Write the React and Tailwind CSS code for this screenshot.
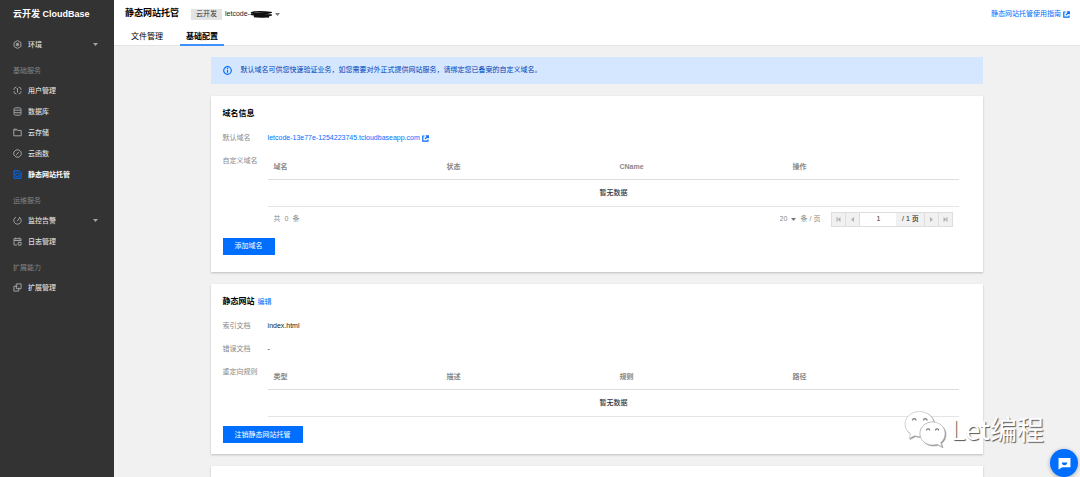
import React from "react";

function Icon({ children, className = "" }) {
  return (
    <svg
      viewBox="0 0 18 18"
      className={`size-[9px] shrink-0 ${className}`}
      fill="none"
      stroke="currentColor"
      strokeWidth="2"
      aria-hidden="true"
    >
      {children}
    </svg>
  );
}

const icons = {
  env: (
    <>
      <path d="M9 1.2 15.8 5v8L9 16.8 2.2 13V5z" />
      <circle cx="9" cy="9" r="2.6" fill="currentColor" />
    </>
  ),
  user: (
    <>
      <path d="M6.8 1.8 2.2 4.6v3M2.2 10.4v3l4.6 2.8M11.2 1.8l4.6 2.8v3M15.8 10.4v3l-4.6 2.8" />
      <path d="M9 4.6v8.8M7.2 5.4H9" />
    </>
  ),
  database: (
    <>
      <rect x="2" y="1.6" width="14" height="14.8" rx="3" />
      <path d="M2 6.4h14M2 11.4h14" />
    </>
  ),
  folder: (
    <>
      <path d="M1.6 15.6V2.4h5.6l1.6 2.4h7.6v10.8z" />
      <path d="M1.6 3.8h6" />
    </>
  ),
  func: (
    <>
      <path d="M6 1.8h6l4.4 4.4v5.6L12 16.2H6l-4.4-4.4V6.2z" />
      <path d="M6.4 12.2 11.6 5.8" />
    </>
  ),
  site: (
    <>
      <path d="M2 1.6h9.6L16 5.4v11H2z" />
      <path d="M5.6 6h4.2l2.4 2v4.6H5.6z" strokeWidth="1.6" />
    </>
  ),
  monitor: (
    <>
      <path d="M6 2.2a7.4 7.4 0 1 0 6 0" />
      <path d="M8.6 10.4 13.4 3" />
    </>
  ),
  log: (
    <>
      <path d="M8 16H2V3.4h14V8M2 7h14M5.4 1v3.6M12.6 1v3.6" />
      <path d="M10.4 10.6h5.8v5.6h-5.8z" />
    </>
  ),
  extend: (
    <>
      <path d="M6.6 1.8h9.6v9.6H6.6z" />
      <path d="M9 6.4H1.8v9.8h9.8V9" />
    </>
  ),
};

function Caret({ className = "" }) {
  return (
    <svg viewBox="0 0 10 6" className={`h-[3px] w-[5px] shrink-0 ${className}`} fill="currentColor" aria-hidden="true">
      <path d="M0 0h10L5 6z" />
    </svg>
  );
}

function External() {
  return (
    <svg viewBox="0 0 14 14" className="size-[7px] shrink-0" fill="none" stroke="currentColor" strokeWidth="2.4" aria-hidden="true">
      <path d="M5 2H1.6v10.4H12V9M7.6 1.6h5v5M12.4 1.8 6 8" />
    </svg>
  );
}

function NavItem({ icon, label, active, expandable }) {
  return (
    <a
      href="#"
      className={`flex h-[21px] items-center gap-[6px] pr-[16px] pl-[13px] text-[7px]/[12px] ${
        active ? "font-bold text-white" : "font-medium text-[#dddddd]"
      }`}
    >
      <Icon className={active ? "text-[#006eff]" : "text-[#a0a0a0]"}>{icons[icon]}</Icon>
      <span className="flex-1">{label}</span>
      {expandable && <Caret className="text-[#a5a5a5]" />}
    </a>
  );
}

function NavLabel({ children }) {
  return <h2 className="h-[25px] pt-[10px] pl-[13px] text-[7px]/[12px] text-[#858585]">{children}</h2>;
}

function Sidebar() {
  return (
    <aside className="w-[114px] shrink-0 bg-[#333333]">
      <div className="mb-[5px] flex h-[29px] items-center pl-[13px] text-[9px] font-bold text-white">
        云开发 CloudBase
      </div>
      <nav>
        <NavItem icon="env" label="环境" expandable />
        <NavLabel>基础服务</NavLabel>
        <NavItem icon="user" label="用户管理" />
        <NavItem icon="database" label="数据库" />
        <NavItem icon="folder" label="云存储" />
        <NavItem icon="func" label="云函数" />
        <NavItem icon="site" label="静态网站托管" active />
        <NavLabel>运维服务</NavLabel>
        <NavItem icon="monitor" label="监控告警" expandable />
        <NavItem icon="log" label="日志管理" />
        <NavLabel>扩展能力</NavLabel>
        <NavItem icon="extend" label="扩展管理" />
      </nav>
    </aside>
  );
}

function Header() {
  return (
    <header className="border-b border-[#e4e4e4] bg-white pl-[11px]">
      <div className="flex h-[28px] items-center pr-[10px]">
        <h1 className="text-[9px] font-bold text-black">静态网站托管</h1>
        <span className="ml-[12px] flex h-[11px] items-center bg-[#e3e3e3] px-[5px] text-[7px] text-[#333]">云开发</span>
        <button type="button" aria-label="切换环境" className="ml-[3px] flex items-center text-[7px] text-[#222]">
          letcode-
          <svg viewBox="0 0 44 18" className="h-[9px] w-[22px]" fill="none" stroke="#111" aria-hidden="true">
            <path d="M2 6 C10 2 30 3 41 5 C30 9 12 5 4 9 C14 12 30 8 42 10 C32 14 16 11 8 13 C20 15 32 13 38 14" strokeWidth="3" />
            <path d="M6 7h30M8 11h30" strokeWidth="3" />
          </svg>
          <Caret className="ml-[3px] text-[#777]" />
        </button>
        <a href="#" className="ml-auto flex items-center gap-[2px] text-[7px] text-[#006eff]">
          静态网站托管使用指南
          <External />
        </a>
      </div>
      <nav className="-mb-px flex gap-[11px] text-[8px]/[15px] text-black">
        <a href="#" className="border-b-2 border-transparent px-[6px] pt-px">文件管理</a>
        <a href="#" className="border-b-2 border-[#3d91ff] px-[6px] pt-px font-bold">基础配置</a>
      </nav>
    </header>
  );
}

function DataTable({ columns }) {
  return (
    <table className="w-full table-fixed border-collapse">
      <thead>
        <tr className="h-[24px] border-b border-[#dddddd]">
          {columns.map((c) => (
            <th key={c} scope="col" className="px-[6px] py-0 text-left font-bold text-[#888]">
              {c}
            </th>
          ))}
        </tr>
      </thead>
      <tbody>
        <tr className="h-[27px] border-b border-[#e5e5e5]">
          <td colSpan={columns.length} className="p-0 text-center font-medium text-[#333]">
            暂无数据
          </td>
        </tr>
      </tbody>
    </table>
  );
}

function PageButton({ label, d }) {
  return (
    <button type="button" aria-label={label} className="flex w-[14px] items-center justify-center border-r border-[#dddddd] text-[#b0b0b0]">
      <svg viewBox="0 0 10 10" className="size-[5px]" fill="currentColor" aria-hidden="true">
        <path d={d} />
      </svg>
    </button>
  );
}

function Pagination() {
  return (
    <div className="flex h-[25px] items-center px-[6px] text-[#888]">
      <span className="flex gap-[4px]">
        <span>共</span>
        <span>0</span>
        <span>条</span>
      </span>
      <label className="ml-auto flex items-center">
        <select aria-label="每页条数" defaultValue="20" className="w-[10px] appearance-none bg-transparent p-0">
          <option>20</option>
        </select>
        <Caret className="mr-[5px] ml-px text-[#777]" />
        条 / 页
      </label>
      <div className="ml-[11px] flex h-[15px] border border-r-0 border-[#dddddd] bg-[#f1f1f1]">
        <PageButton label="首页" d="M1 0h2v10H1zM9 0v10L3 5z" />
        <PageButton label="上一页" d="M8 0v10L2 5z" />
        <input aria-label="页码" defaultValue="1" className="w-[36px] bg-white text-center text-[#333]" />
        <span className="flex w-[29px] items-center justify-center border-r border-[#dddddd] font-medium text-[#222]">/ 1 页</span>
        <PageButton label="下一页" d="M2 0v10l6-5z" />
        <PageButton label="末页" d="M7 0h2v10H7zM1 0v10l6-5z" />
      </div>
    </div>
  );
}

function Row({ label, children }) {
  return (
    <div className="flex items-start">
      <dt className="w-[45px] shrink-0 text-[#888]">{label}</dt>
      <dd className="min-w-0 flex-1">{children}</dd>
    </div>
  );
}

function Card({ children, className = "" }) {
  return (
    <section className={`mt-[12px] bg-white pt-[12px] pr-[24px] pl-[12px] text-[7px]/[12px] shadow-[0_1px_2px_rgba(0,0,0,0.22)] ${className}`}>
      {children}
    </section>
  );
}

function PrimaryButton({ children, className = "" }) {
  return (
    <button type="button" className={`flex h-[17px] items-center bg-[#006eff] px-[12px] text-white ${className}`}>
      {children}
    </button>
  );
}

function Watermark() {
  return (
    <div className="pointer-events-none absolute top-[410px] right-[36px] flex items-center gap-[5px]">
      <svg
        viewBox="0 0 42 38"
        className="h-[38px] w-[42px] drop-shadow-[1px_1px_0px_#999999]"
        fill="white"
        stroke="#b5b5b5"
        strokeWidth="0.6"
        aria-hidden="true"
      >
        <path d="M15.5 1.5C7.5 1.5 1 7 1 14c0 4 2 7.5 5.5 9.8L5 28.5l5.5-2.8c1.6.4 3.2.7 5 .7h1C14 18 21 11.500 30 12 28.5 5.8 22.5 1.5 15.5 1.5z" />
        <path d="M28.5 12C21.5 12 16 17 16 23.500S21.5 35 28.5 35c1.6 0 3.2-.3 4.500-.8l5 2.6-1.3-4.3C39.5 30.300 41 27 41 23.500 41 17 35.5 12 28.5 12z" />
        <path
          d="M8.500 10.5a1.8 1.8 0 0 1 3.6 0M19.500 10.5a1.8 1.8 0 0 1 3.6 0M22.500 20.5a1.6 1.6 0 0 1 3.2 0M31.500 20.5a1.6 1.6 0 0 1 3.2 0"
          fill="none"
          stroke="#777777"
          strokeWidth="1.2"
        />
      </svg>
      <span className="font-['Noto_Sans_CJK_SC',sans-serif] text-[27px]/[38px] text-white [text-shadow:1px_1px_1px_#555]">
        Let编程
      </span>
    </div>
  );
}

export default function App() {
  return (
    <div className="relative flex h-screen overflow-hidden bg-[#f1f1f1] font-['Liberation_Sans','Noto_Sans_CJK_SC',sans-serif]">
      <Sidebar />
      <div className="min-w-0 flex-1">
        <Header />
        <main className="mx-auto mt-[11px] w-4/5">
          <div role="note" className="flex h-[27px] items-center gap-[9px] bg-[#d5e7ff] px-[12px] text-[7px] text-[#003eb3]">
            <svg viewBox="0 0 18 18" className="size-[9px]" fill="none" stroke="#006eff" strokeWidth="2.4" aria-hidden="true">
              <circle cx="9" cy="9" r="7.6" />
              <path d="M9 7.6v6M9 4.2v2" />
            </svg>
            默认域名可供您快速验证业务，如您需要对外正式提供网站服务，请绑定您已备案的自定义域名。
          </div>

          <Card className="pb-[17px]">
            <h2 className="text-[8px]/[12px] font-bold text-black">域名信息</h2>
            <dl className="mt-[12px] flex flex-col gap-[11px]">
              <Row label="默认域名">
                <a href="#" className="flex items-center gap-[2px] text-[#006eff]">
                  letcode-13e77e-1254223745.tcloudbaseapp.com
                  <External />
                </a>
              </Row>
              <Row label="自定义域名">
                <DataTable columns={["域名", "状态", "CName", "操作"]} />
                <Pagination />
              </Row>
            </dl>
            <PrimaryButton className="mt-[6px]">添加域名</PrimaryButton>
          </Card>

          <Card className="pb-[11px]">
            <h2 className="flex text-[8px]/[12px] font-bold text-black">
              静态网站
              <a href="#" className="ml-[3px] text-[7px]/[12px] font-normal text-[#006eff]">编辑</a>
            </h2>
            <dl className="mt-[12px] flex flex-col gap-[11px]">
              <Row label="索引文档">
                <span className="text-[#222]">index.html</span>
              </Row>
              <Row label="错误文档">
                <span className="text-[#222]">-</span>
              </Row>
              <Row label="重定向规则">
                <DataTable columns={["类型", "描述", "规则", "路径"]} />
              </Row>
            </dl>
            <PrimaryButton className="mt-[9px]">注销静态网站托管</PrimaryButton>
          </Card>

          <Card className="pb-[60px]" />
        </main>
      </div>

      <Watermark />
      <button
        type="button"
        aria-label="在线咨询"
        className="absolute right-[2px] bottom-0 flex size-[28px] items-center justify-center rounded-full bg-[#006eff] shadow-[0_1px_4px_rgba(0,0,0,0.3)]"
      >
        <svg viewBox="0 0 24 24" className="size-[13px]" aria-hidden="true">
          <path d="M1 2h22v17H8l-7 4z" fill="white" />
          <path d="M7 10h10c0 3-2 5-5 5s-5-2-5-5z" fill="#006eff" />
        </svg>
      </button>
    </div>
  );
}
